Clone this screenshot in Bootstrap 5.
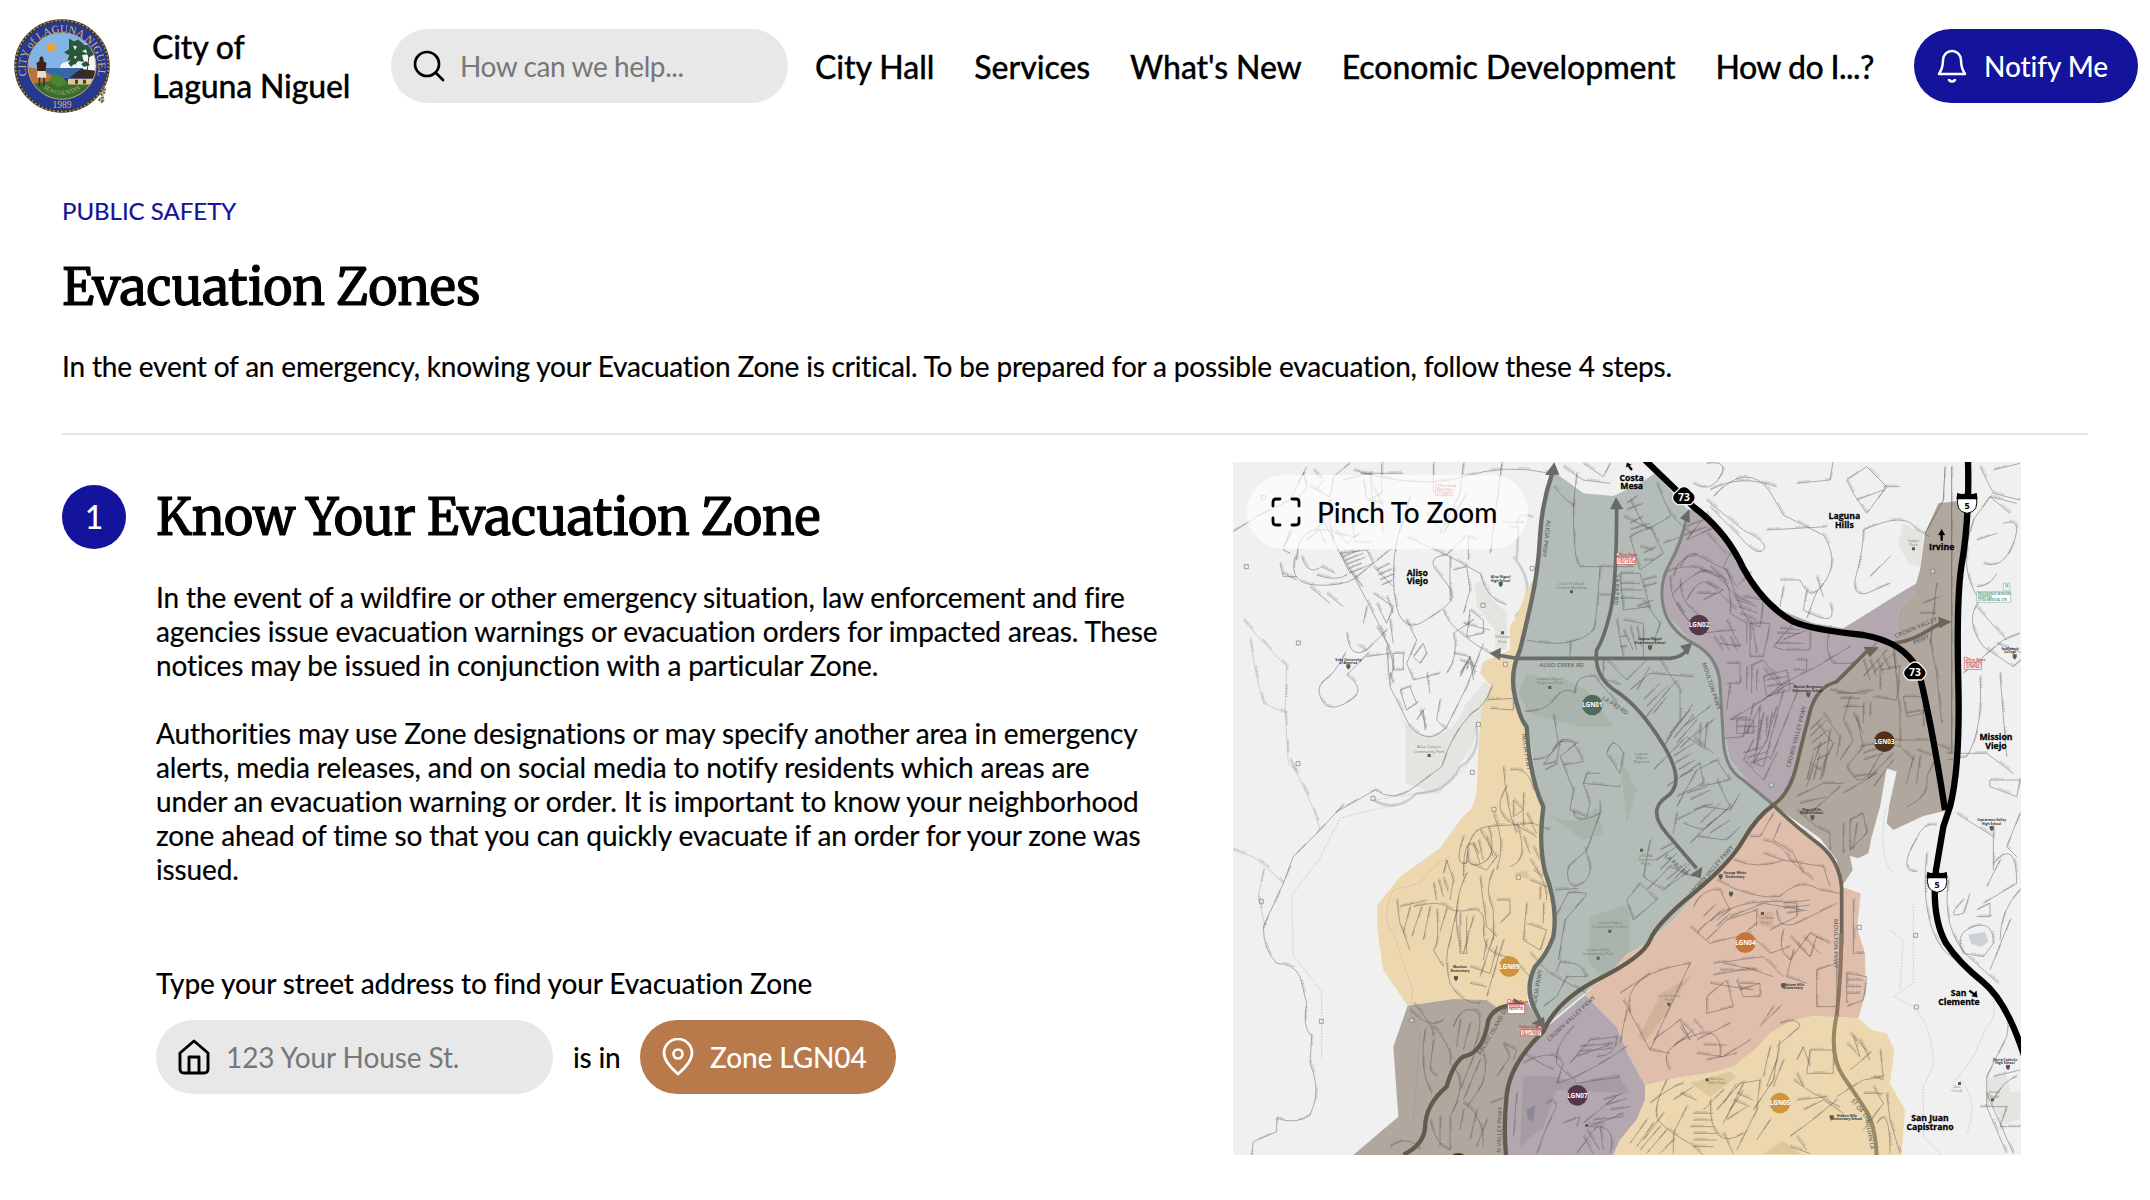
<!DOCTYPE html>
<html lang="en">
<head>
<meta charset="utf-8">
<meta name="viewport" content="width=device-width, initial-scale=1">
<title>Evacuation Zones | City of Laguna Niguel</title>
<link href="https://cdn.jsdelivr.net/npm/bootstrap@5.3.0/dist/css/bootstrap.min.css" rel="stylesheet">
<script src="https://cdn.jsdelivr.net/npm/bootstrap@5.3.0/dist/js/bootstrap.bundle.min.js" defer></script>
<style>
body{font-family:Lato,"Liberation Sans",sans-serif;font-size:28px;line-height:34px;color:#000;background:#fff;overflow:hidden}
.site-head{height:132px;padding:0 12px 0 13px}
.seal{width:98px;height:94px;flex:none;margin-top:-1px}
.brand-name{font-size:32px;line-height:39px;font-weight:500;letter-spacing:-.15px;margin-left:41px;width:239px;color:#000;text-decoration:none;-webkit-text-stroke:.3px #000}
.pill{height:74px;border-radius:37px;flex:none;white-space:nowrap}
.pill-field{width:397px;background:#e8e8e8;color:#777;padding:0 24px 0 22px}
.pill-field svg{flex:none}
.pill-field input{background:transparent;border:0;outline:0;padding:0;width:290px;color:#777;font-size:28px;letter-spacing:-.1px}
.pill-field input::placeholder{color:#777;opacity:1}
.pill-field .search-input{margin-left:-3px;letter-spacing:-.4px}
.pill-blue{background:#13139b;color:#fff;width:224px;padding-left:22px;font-weight:500;letter-spacing:-.1px}
.pill-zone{background:#b97a4b;color:#fff;width:256px;padding-left:22px;font-weight:500;letter-spacing:-.1px}
.site-nav{width:1126px;padding-left:27px;padding-right:40px}
.site-nav a{color:#000;text-decoration:none;font-size:32px;font-weight:500;letter-spacing:-.05px;white-space:nowrap;padding-top:1px;-webkit-text-stroke:.3px #000}
.site-nav a:nth-child(3){letter-spacing:-.1px}
.site-nav a:last-child{letter-spacing:-.55px}
.page{padding:0 62px}
.eyebrow{color:#13139b;font-size:24px;line-height:30px;padding-top:64px;-webkit-text-stroke:.2px #13139b}
.title-face{font-family:Merriweather,"DejaVu Serif Condensed","DejaVu Serif",serif;font-weight:400;font-size:50px;line-height:60px;letter-spacing:-.38px;-webkit-text-stroke:1px #000;white-space:nowrap}
.intro{height:301px}
.page-title{margin-top:32px}
.lede{margin-top:31px;letter-spacing:-.18px;-webkit-text-stroke:.2px #000}
.rule{height:2px;background:#e6e6e6}
.step-num{width:64px;height:64px;background:#13139b;color:#fff;font-size:32px;font-weight:500;margin-top:50px;flex:none}
.step-body{width:1010px;margin-left:30px;padding-top:53px}
.copy{letter-spacing:-.12px;white-space:nowrap;-webkit-text-stroke:.2px #000}
.copy-first{margin:32px 0 34px}
.copy-second{margin-bottom:80px}
.addr-label{margin-bottom:20px;font-weight:500;letter-spacing:-.13px}
.is-in{width:87px;padding-left:20px;font-weight:500;letter-spacing:-.2px}
.map-box{width:788px;height:693px;margin:27px 0 0 67px;flex:none;position:relative;overflow:hidden}
.pinch{position:absolute;left:14px;top:13px;width:281px;background:rgba(255,255,255,.67);padding-left:24px;font-weight:500;letter-spacing:-.15px}
</style>
</head>
<body>
<header class="site-head d-flex align-items-center">
 <svg class="seal" viewBox="0 0 98 96" preserveAspectRatio="none">
  <defs>
   <clipPath id="sealclip"><circle cx="49" cy="48" r="34"/></clipPath>
   <path id="arcTop" d="M13.500 57a36.200 36.200 0 1 1 71 0"/>
   <path id="arcSea" d="M21 54a28.500 28.500 0 0 0 56 0"/>
  </defs>
  <circle cx="49" cy="48" r="46.500" fill="#26388f" stroke="#3c3325" stroke-width="2.500"/>
  <circle cx="49" cy="48" r="46.500" fill="none" stroke="#a58d55" stroke-width="1.700" stroke-dasharray="2 2"/>
  <g clip-path="url(#sealclip)">
   <path fill="#82b4e6" d="M0 0h98v60H0z"/>
   <path fill="#f4f6f5" d="M38 57q2-7 9-6 0-7 7-7 1-13 8-16l22-6v34z"/>
   <path fill="#3367aa" d="M32 50h38v10H32z"/>
   <path fill="#b5733d" d="M14 49q14 1 30 12v12H14z"/>
   <path fill="#3a6e31" d="M14 68q24-8 70-3v24H14z"/>
   <path fill="#4e8430" d="M36 63q4-10 10-5 6 1 7 8l-8 4z"/>
   <path fill="#382b25" d="M56 60l12-9 17 2v8z"/>
   <path fill="#ddc895" d="M55 61h26v6H55z"/>
   <path fill="#4b3829" d="M62 62h3v4h-3zM70 62h3v4h-3z"/>
   <path fill="#29573a" d="M56 20l5 3 4-2 6 5 9 1 2 9-6 3-2-3-5 1 2 7-6-1-3 4-3-5-5 1 2-6-5-3 5-3zM55 45l4-4 3 4-4 4zM68 46l5-3 4 4-6 2z"/>
   <path fill="#f5f5ef" d="M60 27l4 1-2 4zM69 33l4-2 1 4zM61 38l3 0-2 3z"/>
   <path stroke="#4c3527" stroke-width="1" d="M76 37l-2 18"/>
  </g>
  <circle cx="49" cy="48" r="34" fill="none" stroke="#c0a467" stroke-width="1"/>
  <circle cx="38" cy="29" r="4.700" fill="#efa13c"/>
  <path fill="#41221b" d="M26.500 40q2-4 4 0v3l3 2-1 8h-8l-1-8 3-2z"/>
  <path fill="#e6dfd4" d="M24.500 53h8l1 7H24z"/>
  <path stroke="#51291d" stroke-width="1.600" d="M26.500 60v9M31 60v9"/>
  <path fill="none" stroke="#6e603a" stroke-width="3" stroke-dasharray="2 1" d="M89 69q5 4 0 8l1 8-5-4"/>
  <text font-family="Liberation Serif,serif" font-size="11" fill="#d9b873"><textPath href="#arcTop" startOffset="50%" text-anchor="middle">CITY of LAGUNA NIGUEL</textPath></text>
  <text font-family="Liberation Serif,serif" font-size="6" fill="#c3b54f"><textPath href="#arcSea" startOffset="50%" text-anchor="middle">SEA COUNTRY</textPath></text>
  <text x="49" y="91" text-anchor="middle" font-family="Liberation Serif,serif" font-size="9.500" fill="#d9b873">1989</text>
 </svg>
 <a href="#" class="brand-name">City of<br>Laguna Niguel</a>
 <div class="pill pill-field d-flex align-items-center">
  <svg width="34" height="34" viewBox="1 0 34 34" fill="none" stroke="#000" stroke-width="2.700" stroke-linecap="round" class="me-3"><circle cx="15" cy="15" r="12"/><path d="M24 24l7 7"/></svg>
  <input class="search-input" type="text" placeholder="How can we help..." aria-label="Search">
 </div>
 <nav class="site-nav d-flex justify-content-between">
  <a href="#">City Hall</a><a href="#">Services</a><a href="#">What's New</a><a href="#">Economic Development</a><a href="#">How do I...?</a>
 </nav>
 <div class="pill pill-blue d-flex align-items-center">
  <svg width="32" height="36" viewBox="0 0 32 36" fill="none" stroke="#fff" stroke-width="2.500" stroke-linecap="round" stroke-linejoin="round" class="me-3"><path d="M3 26q4-6 4-14a9 9 0 0 1 18 0q0 8 4 14zM13 32q3 3 6 0"/></svg>
  <span>Notify Me</span>
 </div>
</header>
<main class="page">
 <section class="intro">
  <div class="eyebrow">PUBLIC SAFETY</div>
  <h1 class="title-face page-title mb-0">Evacuation Zones</h1>
  <p class="lede mb-0">In the event of an emergency, knowing your Evacuation Zone is critical. To be prepared for a possible evacuation, follow these 4 steps.</p>
 </section>
 <div class="rule"></div>
 <section class="d-flex">
  <div class="step-num rounded-circle d-flex align-items-center justify-content-center">1</div>
  <div class="step-body">
   <h2 class="title-face mb-0">Know Your Evacuation Zone</h2>
   <p class="copy copy-first">In the event of a wildfire or other emergency situation, law enforcement and fire<br>agencies issue evacuation warnings or evacuation orders for impacted areas. These<br>notices may be issued in conjunction with a particular Zone.</p>
   <p class="copy copy-second">Authorities may use Zone designations or may specify another area in emergency<br>alerts, media releases, and on social media to notify residents which areas are<br>under an evacuation warning or order. It is important to know your neighborhood<br>zone ahead of time so that you can quickly evacuate if an order for your zone was<br>issued.</p>
   <label for="addr" class="addr-label d-block">Type your street address to find your Evacuation Zone</label>
   <div class="d-flex align-items-center">
    <div class="pill pill-field d-flex align-items-center">
     <svg width="32" height="36" viewBox="0 0 32 36" fill="none" stroke="#000" stroke-width="2.900" stroke-linejoin="round" class="me-3"><path d="M2 14L16 2l14 12v16q0 4-4 4H6q-4 0-4-4zM11 34V18h10v16"/></svg>
     <input id="addr" type="text" placeholder="123 Your House St.">
    </div>
    <span class="is-in">is in</span>
    <div class="pill pill-zone d-flex align-items-center">
     <svg width="32" height="38" viewBox="0 0 32 38" fill="none" stroke="#fff" stroke-width="2.700" class="me-3"><path d="M16 36Q2 24 2 15a14 14 0 0 1 28 0q0 9-14 21z"/><circle cx="16" cy="16" r="4.500"/></svg>
     <span>Zone LGN04</span>
    </div>
   </div>
  </div>
  <div class="map-box">
   <svg width="788" height="693" viewBox="9 6 2364 2079" preserveAspectRatio="none" class="d-block" font-family="Open Sans,Noto Sans,sans-serif">
    <defs>
    <!-- neighbourhood streets, drawn once as lines and once as lettering ticks -->
    <g id="streets" fill="none" stroke-linejoin="round">
     <path d="M9 215L90 165 180 120 230 20M240 80l60 30 10-60 50-40M390 40h130M300 120q-10 100 30 160t110 200 40 170M200 300q0-80 60-90t90 40l40-30M195 290q-20 80 60 85t120-20l110-90M260 345q60 20 90 0M215 290q20 60 60 30l40 20M455 10v90l-40 20M610 10v90M540 110L500 240M700 10l-10 90-60 120M815 10l-20 160-15 110M370 30q200 60 330 20t260-10"/>
     <path d="M500 240q-20 120 0 200t80 45 80-60-30-80 20-60l60-60M530 230l130 60 90 50q20 80 80 95M640 450q20 60 140 130M670 330l40-10 10 70-20 70M720 450l40 30v40l-50 10zM660 290v130M530 480l30 60-30 70 20 50 80-20M550 590l30-40 10 30-20 30zM650 640q40-60 20-120l60-40M480 480l10 70M430 400l60 40-20 50-30-60M430 320l60 60M330 280l80-10 20 40-70 30zM350 520q10 80 60 50l60-60M410 440l-10 50M345 580q-30 60-60 80t-10 60 80 5-5-80l70-70M410 590l70-10M470 560l10 120 60 120q60 60 110 0l60-120 50-130M590 640l10 60M630 720l-10 60 30 30M570 750l20 50M510 690l30-10 20 50-30 20zM490 580h30v50h-30zM670 580l50 10-10 40M785 680q-20 60-60 80-60 60-90 160l-80 60q-60 50-120 10l-115 65M260 210l20-30 30 60M160 260l30-50M160 340l40 20M240 380l60 50M290 400l50 40M360 330l40 50M340 60l80-20 10 100M380 160l70-20 10 80M590 160l50 60 70-120M740 240l-25-10v70M690 650l30-60 15 50"/>
     <path d="M340 290l50-20M345 302l55-22M350 314l55-22M355 326l40-16M440 330l40-20M445 345l42-18M450 360l42-18M455 375l30-12M220 40l10 40-20 30M250 30l30 30-20 30M400 60l10 60 50 10M430 80l30 60M180 210l-20 60 20 10M230 240l40-30 15 40M315 220l60 10-10-40M150 310l10 40 40 0M470 410l20 50M440 500l40 60M700 490l80 20M690 600l50 20M690 640l30-50 10 70M560 780l20-30 5 60M480 640l10 30"/>
     <path stroke-opacity=".3" d="M40 480q70 80 130 140l-5 130 10 160 30 30M60 540l20 110 20 80 70 30M180 900l50 100q30 70 40 110M9 1170l60 20 40 30 50 50M100 1230l-15 80 20 90"/>
     <path d="M340 1035L260 1120l-70 70-30 80-60 130q0 70 40 110 50 0 70 40l20 80q-15 70 15 100l-5 80q30 70 10 130l-10 25q-40 30-100 10v40l-70 30-10 70"/>
     <path d="M1030 130q0 180 20 190h160M1110 320q-10 160-20 190-60 60-200 30M1110 405h40M1020 545v50M1040 40l-10 100-60-60M1200 120l50 90 70-40M1180 170l90 40M1200 230l60-30 40 80-70 50zM1170 340h60l30 100-80 10zM1160 480l20 110M1180 480l60 10v100M1240 420l50 70-20 60M1220 440l50-20M1120 595v60l50 20M1130 600l60 60 60-60M1280 70l40 90 60 60-80 30"/>
     <path d="M1000 20l60 40 80 10M1060 10l60 40 20-40M1190 130l30-20M1190 150l50-20M1200 190l40-20M1200 210l60-20M1230 260l40 10M1240 280l40-20M1240 300l30 0M1170 370h60M1170 390h70M1170 415h70M1240 360l40-10M1240 380l40-10M1180 510l30 60M1200 500l20 70M1220 500l15 60M1170 530h20M1170 560h20"/>
     <path d="M885 755q60 0 90-40t60-15q0-60 60-50l50 60 30 40M970 765l15 80-45 70 40-10 10-60 40 0 30 60-60 10M900 900q60 0 80-40t60-10l-50 40 40 100-10 60 50 20 10-40-20-60 110 10M1060 970l10-30h40M945 930l40-20M1130 880q20-60 50 0l-10 60zM1030 1050q0 50 80 10v-40M1110 1060l-40 110-55 50q-10 50 20 60 60-20 40-80l-10-40M975 1290l70-5M985 1500l20-120 60-70q10-15-10-12h-40l-40 75M900 1480l60 60 110 60M940 1640l40-30 30-60 60 0q-20-40-40-40t-40-5l-10 30"/>
     <path d="M1200 690l60-50 130 10M1220 690l40-70M1290 600l60 90v90l-40 60M1240 780l100-120M1300 860l90-130M1360 800l80-60M1270 930l100-100 60 40M1310 980l100-70 10 60-80 40M1340 1040l60-110 60-30 40 60-90 20M1450 780l-60 50 60 50M1340 1080l80-40 80 10 30-50M1460 960l40 80-80 70-60-20M1260 1140l-20 110 60 40 80-60M1250 1290l70-70 70 30M1280 1200l60-40 40 50-70 70M1210 1380l70-60-50-50-40 50zM1400 1130l90 10 40-40M1380 1150l60-60"/>
     <path d="M1320 820l60-70M1330 835l60-70M1340 850l60-70M1350 865l60-60M1330 890l60-40M1335 910l50-30M1345 930l50-30M1350 950l40-20M1240 720l50-50M1250 740l60-60M1270 760l40-50M1410 790l0 70M1430 790l-5 70M1370 1000l60-20M1380 1020l60-30M1390 1050l60-20M1290 1170l40-20M1290 1230l50-50M1340 1060l-10 60M1410 1090l60-60M1430 1100l60-50M1440 1120l60-40M1310 1260l60-50"/>
     <path d="M1300 340q120-60 210 60l60 110 10 70M1330 350q10-60 70-65M1330 400q80-90 130-60t40 120l50 30 0 60M1350 320q30-60 60-30l80 40 30 80 50 20M1370 420q40-80 80-40l70 70M1430 370l50 20-60 30M1340 430l60 90 120-10M1500 280l60 60-40 40-40-60zM1540 410l60 10-10 80-30-10M1490 480l40 80-60-10M1560 490h60l-20 100h-40zM1630 560l60-70 50 10v70h-80zM1640 550h80M1490 610h40v60h-40M1500 670l-10 80M1500 780l100-60 60-50 100-50 100-60M1800 500q-20 80 10 110h60l70-60M1560 620l40-20 60 80-60 40M1600 650l70-20 10 60-70 20zM1700 600h30v30h-40M1640 700q60-60 60 0l-80 200M1660 690l-60 230M1570 730l-20 90 40-80-10 130M1500 780l50-10-10 60-60 5M1600 760l-30 150M1640 740l-30 100-40 70 30 10M1540 900l60 60 40-80M1570 840l-30 60M1370 240l60-80 30 40z"/>
     <path d="M1320 350q0 90 80 150M1350 360q0 80 80 120M1370 200l50-20M1380 220l50-20M1430 220l60 60M1440 320l50 40M1410 330l60 20M1400 400l60 0M1520 420l60 20M1525 440l60 20M1530 460l50 20M1450 530l30 40M1470 530l30 40M1500 530l20 40M1640 520l70 0M1650 505l60 5M1660 540l70-30M1550 620v70M1565 620v80M1580 630v60M1600 625l50 50M1610 660l60-10M1610 680l60-10M1540 880l60-20M1550 895l60-20M1560 910l60-20M1590 780v60M1610 770v60M1625 760l-10 60M1520 800h60M1520 780h50v40h-50z"/>
     <path d="M1760 790l50 60-40 80-30-20M1800 690l60 10 70-10M1860 710l-20 70 30 60-40 60M1780 760l50 70-10 60M1840 740h60M1880 770l20 90-50 60M1950 690v-60l60-10-10 100-70-10M1900 650l70-80M1930 640l60-60 10 50M1770 850l-40 130M1800 810l-20 140M1850 920q40 80 80 0t80-60l40 40M1870 950l70-10M1700 1010l80-40 60 0M1740 1060l90-80M2020 710h60v50l-50 10zM2030 760l50-10v50M1990 560l20 200 0 100M1840 1000l100-60M2100 540l20 100 15 150M2060 870l60 20-30 60q10 60-60 90M1890 860l100-20 110 0 60 30M2080 430l50-20M2070 460h50M1700 1050l60 50 40 20 0 50M1860 1080l40-20 10 60-50 50zM1840 1090v90M1880 1090l-10 80M2100 550l20-180"/>
     <path d="M1820 700h90M1830 715l60 0M1740 810l40-40M1740 830l50-50M1745 850l50-40M1750 870l50-30M1760 900l40-20M1900 600l20 60M1920 600l20 50M1940 600l20 40M1960 590l20 40M1730 960l20-80M1750 960l20-80M1770 960l20-70M1900 880l60-20M1900 900l60-20M1910 960l80-80M1930 980l60-80M1710 1030l80-20M1900 730v60M1920 730v40M1870 760l30 60M2050 890l-20 80M2070 890l-10 80"/>
     <path stroke-width="3" d="M2145 20l-5 100-55 100M2165 20v860"/>
     <path d="M1390 70q50 30 80-20t-40-40M1450 110q100-110 170-15l40 70 120 60q60 90-20 170l-30 80M1440 90q90-50 200-10M1430 120l110 90q80 40 60 60t-70-40l-90-90M1610 210l180-10M1700 70l100-10 10-60M1850 60l60-40 60 60-60 80-40-60zM1880 120l80-30M1960 80h50M1650 360l60 0q30 60 50 30M1660 380l-10 60M1730 390l-10 60q110 60 80-20M1760 350l20 60M1900 210q130-60 160 0l40 20M1900 210q0 60-20 130t30 60l70-30M1920 350l60-60M2340 160l-60-50-50 70q-50 150 20 240-50 60 10 140l90 60 80-70M2250 20l40 80 80 20M2290 30l80-20M2280 110l80 20M2240 380q40 0 60-40M2240 240l60-20M2260 310q60 20 90-60t-30-60M2300 550l80 30M2200 640l120-100 50-20M2250 650q10 160-40 240l-60 10M2310 640l10 130 10 120M2150 880h120l80 60M2280 960l90 0-10 50-80-30zM2240 440l90 100"/>
     <path d="M700 1130q-30 90 10 80 0-100 60-110l140-10 50 20M715 1170q-10 60 40 40t20-110M700 1250q0-150 50-70M790 1060q40 90 10 170M860 1090q40 110-20 130M890 1060l30 60M750 1110l50 80-30 40-50-20M710 1240q-50 100-20 220M640 1240l10-40 20 60-10 60M500 1320l10 70 30 80M510 1340l80-20M550 1340q80-20 100 0t70 10 40 60q0 80 80 80l60 60M540 1340l-20 80M575 1340l-30 90M600 1340l-20 100M620 1350q10 100-10 120l30 50M650 1345l-20 70M680 1350l-20 90q-20 60 0 130 30 60 90 60M690 1360v120h20v-110M730 1370l-30 110M790 1230q-30 60 0 120v90M750 1250l20 150 30 30M820 1440l-50 170M790 1430l-40 120M800 1320h40v40l-30 30M890 1330l-10 110 50 30 20-60-60-20M940 1330v60M900 1200q50 60 50 120M880 1000v100M820 920q10 130 40 200M830 980q-40 60 0 100l90 50M850 1020l30 30-30 20zM770 720l80-5v35l-70-5"/>
     <path d="M610 1270l10 50M625 1260l15 50M640 1255l15 40M730 1150l20 60M745 1140l15 60M770 1130l20 60M840 930q60-10 70 60M880 1130l20 50M910 1160l20 40M910 1230l30 20M900 1260l50 20M930 1280v40M770 1440l-10 60M800 1460l-20 80M720 1520l60 20M720 1570l50 10"/>
     <path d="M550 1630q60 60 60 100M610 1700q60 60 50 110 60 50 0 160M670 1700q20-60 60-50t0 120M690 1680l-10 80M585 1710q-20 120 20 190M610 1740l-10 90 20 20M720 1690l-20 80M730 1790l-40 100M750 1800l-50 120M760 1780q20 60-20 120l-30 40M700 1950l-10 60M740 1950l-20 90M770 1980l-30 80M600 1980q20 80 60 90v-100M630 1970v90M820 1750l20 40-40 60M700 1930q60 30 60 130M480 2060q60-40 90 10M540 1650q60 60 100 30M820 1750l40 20-10 30M780 1930l40-15"/>
     <path d="M880 1810q90-50 120 0l-20 60 60-20 90-50 60-40M1030 1700q-60 60-50 110l60 60 130-20M1020 1810l60-70 80-10q0 60-60 60M1040 1790l110-40M950 1930q20-20 30 10l-30 60-30 80M1000 1990l50-20-10 30M1060 1990l60-50 50-40M1080 2000l100-40M1040 2080l60-80q60 0 40 80M1070 2010l40 60M1090 1980l90-10M860 1900l-10 130M880 1780l90 50M1190 1650l-20 100M1050 1760l90-10M1045 1775l100-10M1120 1920l60-20M1130 1935l60-20M1140 1950l60-10M1060 2030l30 50M1110 2000l10 70"/>
     <path d="M1560 1130l30 0 40-70M1600 1140q60 10 80 60l70 60M1650 1060l130 100M1650 1090l-20 50 60 40 30 60M1600 1180l60 20 120 20 20 60M1510 1200q80 30 150 0M1460 1260q110 60 190 50 60-60 120-20l60 10M1390 1340q30-60 80-50l30 60-40 30M1400 1420q100-120 300-90v40l-80 40M1430 1440l60-60 90-30 0 50M1380 1400l60 50 120-30 60 60 60-20M1500 1370l100-40 120 20M1640 1350q0 60 60 40l120-60M1660 1410q-20 60 20 90l60-80M1680 1430l60 60 20-60 40 20M1450 1510l150-20 60 60M1470 1530h100l60 20M1440 1570l130 20M1430 1610l60-50 20 80-80 20zM1530 1590l60-20M1760 1530l60-20v130h-60zM1850 1540l60 10-10 70-50 20M1870 1320v160h30M1850 1540v90M1200 1660q-30-120 180-150l-60 130-60 130M1170 1600l90-60M1270 1740l80-60 30 60M1320 1830q-40-60 60-100t90 60M1400 1780l80 10 80-50M1330 1760l60-50M1400 1740l100-50M1180 1620l80 150 60 10M1690 1470l-20 80 60 20"/>
     <path d="M1420 1370l40-40M1440 1385l40-40M1460 1400l40-40M1660 1330l80-10M1660 1345l80-10M1670 1360l60-10M1700 1450l40 40M1720 1430l50 50M1740 1420l40 20M1480 1510l100 20M1450 1545l110-20M1520 1560l20 50h50v-40h-60M1350 1700l30 40M1360 1690l40 40M1390 1680l30 30M1420 1755h70M1430 1800l90-20M1630 1640l-40 60M1650 1640l-50 50M1580 1390l-60 50M1850 1560h50M1850 1580h45M1850 1600h40"/>
     <path d="M1260 1930q60-50 100-60M1310 1860q-40 80-30 110t100 80l40 35M1330 1920l60-40M1370 1940l-40 80v60M1440 1920q0 160 100 100M1460 1950l70-80 60-10-10 90-60 120M1570 1950l60-90 20-120M1620 1760l-20 90M1650 1690q60-20 60 10l-70 60M1740 1770h70v70h-80zM1700 1800l20-40 20 60M1690 1860l60 40 80 40M1700 1920l90-10M1720 1950l60-30 60 40M1860 1720l60 60-60 50M1890 1740l30 60M1950 1770l10 80-60 10-80 50M1930 1880l30 50-60 80M1970 1900l10 80 30 100M1680 2030l80-60 60-50M1380 2000h70M1390 2040h70M1300 1960l-60 80M1250 1980l-50 70M1480 1890l-60 60M1540 1870l-60 120M1940 1990q40-60 40 90M1620 1980l-40 60"/>
     <path d="M1390 1960h60M1390 1980h60M1390 2020h70M1390 2060h60M1480 1930l40-60M1500 1950l40-60M1490 1980l60-40M1520 1900l50 20M1510 1920l50 20M1270 1990l-50 70M1290 2000l-60 70M1310 2010l-60 70M1330 2040l-40 40M1870 1730l20 60M1850 1750l40 40M1700 1840l20 40M1640 1800l-30 80M1660 1800l-30 80M1930 1850l30 10M1680 2060l60 20M1700 2030l30 40M1900 1900l60 0M1480 2020l30 60M1350 1900l50 20"/>
     <path d="M2180 1060l110 70M2060 1235q-60 0 0-100 20-50 60-40M2290 1210q70-80 70 60l-100 60M2200 1320q-60 60 0 40l20-60M2240 1350l40-20v40h-40M2200 1480q-30-60 30-80t60 50l-30 40zM2370 1290q-60 60-60 150M2340 1380l-60 150M2370 1060l-40 100 30 30M2310 1200l-40 80M2290 1850l80-20M2290 1920q30-60 70-70M2270 1900l80 180M2250 1940h80l-20 60 60 0M2290 1100v130"/>
     <path d="M2090 1180q-20 200 50 290l130 110q80 60 60 150l-60 120v90l60 140M2155 1260q-20 150 60 230l90 80"/>
    </g>
    </defs>
    <path fill="#f0f0f0" d="M0 0h2380v2090H0z"/>
    <!-- parks and water outside the zones -->
    <g fill="#e4e5e1"><path d="M505 745q30 90 120 80 60-20 80-90l60-70 20 20-70 190-90 130-98-35v-165zM735 370q50-20 50 45l45 45v110h-35V510l-55-70zM2020 190l60 35-10 95-35-10-30-55zM2270 1855l60-10 10 50 30 0v80l-45 20-50-80z"/></g>
    <g fill="none" stroke="#c8d0d5" stroke-width="8"><path d="M850 290q50 60 40 110t-35 70M910 170q-60-20-45 40l-5 90M430 1020q70 40 130-20 90 0 130-80 60-30 50-120"/><path fill="#cad2d6" stroke="none" d="M380 555q30-10 30 20zM2215 1425l50-10 10 30-20 15-30-8z"/></g>
    <!-- zones -->
    <path fill="#b4bcb8" d="M968 35L945 130 930 230 925 330 905 420 870 570 850 630 855 710 890 790 905 870 915 960 942 1040 935 1130 945 1235 975 1335 970 1430 950 1485 905 1530 895 1600 935 1710 980 1670 1100 1570 1170 1495 1250 1450 1330 1380 1480 1210 1560 1110 1630 1035 1560 970 1500 900 1480 800 1470 680 1440 600 1380 540 1315 470 1290 410 1300 340 1350 220 1375 150 1275 40 1230 70 1150 108 1060 100 985 45z"/>
    <path fill="#b4a8b0" d="M1375 150L1400 150 1500 250 1570 370 1650 450 1750 490 1840 505 1920 455 2000 405 2060 370 2050 400 2010 440 2000 480 2005 545 1925 570 1820 665 1760 710 1740 750 1700 920 1680 980 1630 1035 1560 970 1500 900 1480 800 1470 680 1440 600 1380 540 1315 470 1290 410 1300 340 1350 220z"/>
    <path fill="#b0a79e" d="M2125 130L2190 122 2215 150 2190 320 2183 480 2185 880 2155 1050 2080 1068 1990 1110 1970 1090 1978 1035 2000 935 1970 925 1950 1040 1925 1130 1915 1180 1885 1195 1860 1188 1868 1230 1835 1280 1820 1200 1770 1135 1630 1035 1680 980 1700 920 1740 750 1760 710 1820 665 1925 570 2005 545 2000 480 2010 440 2050 400 2070 330 2085 220z"/>
    <path fill="#dfbfac" d="M1630 1037L1770 1150 1820 1220 1835 1280 1892 1300 1880 1400 1905 1480 1907 1600 1885 1675 1750 1668 1680 1685 1620 1720 1580 1765 1510 1820 1440 1840 1350 1852 1245 1875 1195 1785 1160 1700 1110 1650 1065 1605 1170 1495 1250 1450 1330 1380 1480 1210 1560 1110z"/>
    <path fill="#b4a8b0" d="M1065 1605L1110 1650 1160 1700 1195 1785 1245 1875 1245 1920 1220 1980 1170 2040 1150 2085 828 2085 825 1950 835 1870 870 1800 940 1710z"/>
    <path fill="#edd7ae" d="M1245 1875L1350 1852 1440 1840 1510 1820 1580 1765 1620 1720 1680 1685 1750 1668 1885 1675 1925 1710 1970 1720 1993 1770 1980 1870 2025 1950 2015 2085 1150 2085 1170 2040 1220 1980 1245 1920z"/>
    <path fill="#edd7ae" d="M920 345L895 380 865 460 840 500 840 570 760 605 750 640 785 680 755 740 745 860 740 1000 725 1045 690 1080 630 1165 510 1250 442 1335 442 1410 460 1530 533 1637 670 1617 770 1620 800 1642 890 1630 905 1530 950 1485 970 1430 975 1335 945 1235 935 1130 942 1040 915 960 905 870 890 790 855 710 850 630 870 570 905 420z"/>
    <path fill="#b0a79e" d="M533 1637L490 1760 505 1970 370 2085 828 2085 825 1950 835 1870 870 1800 940 1710 895 1630 800 1642 770 1620 670 1617z"/>
    <g fill="#a9b4ac"><path d="M890 640q60 20 120 20l60 30 80 110-100 0-150-40-35-60zM950 1060q90 50 150-20l20 80-60 20zM1080 1370l120-40v140l-80 90-45-60zM1170 890l50 100-30 100z"/><path fill="#a59ca4" d="M880 1850q100-10 160 20l120-30 40 60-220-10-40 110-70 60z"/><path fill="#d3b299" d="M1225 1730l70-130 90-55-80 120-60 80zM1590 1355l40 0v50l-45-10z"/><path fill="#dcc89b" d="M1380 1870l120-35 20 15-80 60zM1600 2082l60-40 50 40zM850 1240l40-10 10 30z"/><path fill="#8b8997" d="M890 1950l25-15-5 50-18-10z"/></g>
    <!-- trails -->
    <g fill="none" stroke="#777" stroke-opacity=".45" stroke-width="2" stroke-dasharray="5 4"><path d="M500 1035q-100 20-170 40l-60 120-85 110 5 180 85 110v200M480 560l-10 100M740 790l-30 130-80 70-200 30M660 1190q-60 30-90 80l-80 20q-40 90 0 130l30 90 30 80-10 60 30 70-20 260M1965 1050q-20 150 25 190M1890 1330l-20 140M2050 1330v240l-60 40 60 30q60 60 60 180l-30 60 0 150 70 70M1980 1410l40 30-10 150M2260 1560q60 90 10 140l-40 90-60 80M2190 1860q60 60 20 160"/></g>
    <use href="#streets" stroke="#555" stroke-opacity=".62" stroke-width="2.200"/>
    <use href="#streets" transform="translate(3 -4)" stroke="#444" stroke-opacity=".27" stroke-width="5.500" stroke-dasharray="3 2 2 2 4 2 3 2 2 3 3 2 2 2 3 46"/>

    <!-- main roads -->
    <g fill="none" stroke="#686d68" stroke-width="13" stroke-linejoin="round">
     <path d="M968 35Q935 130 930 230T905 420 870 570Q838 640 855 710T890 800Q900 960 940 1040 925 1150 945 1235 985 1340 970 1430 950 1485 915 1520 885 1580 910 1640L930 1680"/>
     <path stroke-width="11" d="M800 585l60 10h460q40-5 55-30M1160 130q0 250-20 330t-40 110q-10 80 60 125t140 160 10 155 0 110l90 105"/>
     <path stroke="#7d827e" stroke-width="9" d="M1370 170q-15 80-50 140t-20 130 90 110 80 120 10 170 60 120l90 75"/>
     <path stroke="#625b4d" d="M1630 1035q-50 35-90 105t-150 160-130 140-150 115-170 160q-100 95-110 190t-2 180"/>
     <path stroke="#6f6556" stroke-width="11" d="M1630 1035q50-35 70-120t40-160 80-90q60-60 95-95M1970 550q60 0 110-30l60-35"/>
     <path stroke="#625b4d" d="M520 2085q60-30 65-80 0-70 65-125 20-70 50-90 60-10 75-110 20-45 85-45"/>
     <path stroke="#6d6658" stroke-width="11" d="M1630 1035q60 60 140 120 60 50 65 130v170"/>
     <path stroke="#8e7561" stroke-width="12" d="M1834 1420q0 120-14 250"/>
     <path stroke="#9b8961" stroke-width="12" d="M1820 1665q-25 120 20 185t70 105 30 130"/>
     <g fill="#666b66" stroke="none"><path d="M945 45l28-38 15 37zM1140 148l18-36 22 36zM778 580l35-17-3 38zM1350 558l36-10-12 38zM905 1690l37-20 5 40zM1380 1245l32 10 5-35zM1350 175l28-28 2 42z"/><path fill="#6f6556" d="M1900 560l47 2-28 30zM2125 470l40 15-37 20z"/><path fill="#625b4d" d="M850 1615l37 17-33 20z"/></g>
    </g>
    <g fill="none" stroke="#000" stroke-width="19">
     <path d="M1245 0l145 140q100 75 150 185 60 110 150 160 60 25 210 40 120 20 165 105 40 160 80 420"/>
     <path d="M2214 0q5 180-20 320-15 100-9 350t-25 370l-20 60-22 130q-15 140 30 220 40 60 110 115 75 60 130 240"/>
    </g>
    <g text-anchor="middle" font-weight="700" fill="#fff" font-size="31">
     <g id="s73"><path fill="#000" stroke="#f2f2f2" stroke-width="4" d="M1340 94q22-28 44 0 24 20-2 40h-40q-28-20-2-40z"/><text x="1362" y="122">73</text></g>
     <use href="#s73" transform="translate(693 526)"/>
     <g id="s5"><path fill="#fff" stroke="#000" stroke-width="3" d="M2185 105q-12 50 26 55 40-5 26-55z"/><path fill="#000" d="M2182 98q14 8 28 0 14 8 30 0l3 20h-64z"/><text x="2211" y="147" fill="#000" font-size="27">5</text></g>
     <use href="#s5" transform="translate(-90 1137)"/>
    </g>
    <!-- zone badges -->
    <g font-weight="700" fill="#fff" font-size="19" text-anchor="middle">
     <circle cx="1087" cy="735" r="31" fill="#52695d"/><text x="1087" y="742">LGN01</text>
     <circle cx="1407" cy="495" r="31" fill="#55374d"/><text x="1407" y="502">LGN02</text>
     <circle cx="1963" cy="845" r="31" fill="#513219"/><text x="1963" y="852">LGN03</text>
     <circle cx="1546" cy="1448" r="31" fill="#c67439"/><text x="1546" y="1455">LGN04</text>
     <circle cx="1650" cy="1929" r="31" fill="#d0943c"/><text x="1650" y="1936">LGN05</text>
     <circle cx="1042" cy="1906" r="31" fill="#55374d"/><text x="1042" y="1913">LGN07</text>
     <circle cx="838" cy="1520" r="31" fill="#d0943c"/><text x="838" y="1527">LGN09</text>
     <circle cx="685" cy="2110" r="31" fill="#513219"/>
    </g>
    <!-- places -->
    <g font-weight="700" font-size="26" fill="#000" text-anchor="middle" stroke="#000" stroke-width=".8">
     <text x="562" y="347">Aliso</text><text x="562" y="373">Viejo</text>
     <text x="1205" y="62">Costa</text><text x="1205" y="87">Mesa</text>
     <text x="1843" y="177">Laguna</text><text x="1843" y="204">Hills</text>
     <text x="2135" y="270">Irvine</text>
     <text x="2298" y="840">Mission</text><text x="2298" y="867">Viejo</text>
     <text x="2186" y="1608">San</text><text x="2187" y="1635">Clemente</text>
     <text x="2100" y="1983">San Juan</text><text x="2100" y="2010">Capistrano</text>
     <path stroke-width="7" fill="none" d="M2135 242v-22M1206 30l-10-12M2218 1592l16 12"/><path d="M2125 225l10-17 10 17zM1188 22l3-14 13 6zM2242 1612l-3-20-14 17z"/>
    </g>
    <!-- road names -->
    <g font-weight="600" font-size="18" fill="#666b67">
     <text x="928" y="620" textLength="134">ALISO CREEK RD</text>
     <text transform="translate(950 180)rotate(97)">ALICIA PKWY</text><text transform="translate(876 822)rotate(82)">ALICIA PKWY</text>
     <text transform="translate(1157 345)rotate(94)">LA PAZ RD</text><text transform="translate(1115 717)rotate(33)">LA PAZ RD</text><text transform="translate(1303 1190)rotate(42)">LA PAZ RD</text>
     <text transform="translate(1416 610)rotate(72)">MOULTON PKWY</text><text transform="translate(1813 1377)rotate(90)">MOULTON PKWY</text>
     <text transform="translate(1680 924)rotate(-75)">CROWN VALLEY PKWY</text><text transform="translate(1386 1307)rotate(-49)">CROWN VALLEY PKWY</text><text transform="translate(958 1745)rotate(-43)">CROWN VALLEY PKWY</text>
     <text transform="translate(1997 535)rotate(-23)">CROWN VALLEY</text><text transform="translate(2053 555)rotate(-25)">PKWY</text>
     <text transform="translate(753 1787)rotate(-60)">PACIFIC ISLAND DR</text><text transform="translate(918 1640)rotate(-80)">ALICIA PKWY</text><text transform="translate(812 2078)rotate(-88)">N VALLEY PKWY</text>
     <text transform="translate(1862 1922)rotate(52)">ST OF THE</text><text transform="translate(1906 1980)rotate(80)" font-size="16">GOLDEN LA</text>
    </g>
    <!-- parks, schools and civic buildings -->
    <g font-size="12" fill="#737a74" text-anchor="middle">
     <text x="1025" y="374">Chet Holifield</text><text x="1025" y="388">Federal Building</text><text x="960" y="660">Laguna Niguel</text><text x="960" y="673">Regional Park</text>
     <text x="597" y="865">Aliso Canyon</text><text x="597" y="878">Community Park</text><text x="817" y="535">Hillview</text><text x="817" y="548">Park</text><text x="852" y="190">Foxborough</text><text x="852" y="203">Park</text><text x="398" y="250">Oak Park</text>
     <text x="1140" y="1392">Crown Valley</text><text x="1140" y="1404">Community Center</text><text x="1105" y="1473">Crown Valley</text><text x="1105" y="1486">Community Park</text>
     <text x="2050" y="245">Cabot</text><text x="2050" y="258">Park</text><text x="1610" y="1378">La Plata</text><text x="1605" y="1391">Park</text><text x="1317" y="1612">La Hermosa</text><text x="1317" y="1624">Park</text><text x="1460" y="1860">Marina</text><text x="1460" y="1872">Hills Park</text><text x="1235" y="885">Laguna</text><text x="1235" y="897">Niguel</text><text x="1235" y="909">Regional</text><text x="1247" y="1190">USCRA</text><text x="1254" y="1203">Treatment</text><text x="1247" y="1215">Plant</text><text x="1100" y="1993">Seminole</text><text x="1090" y="2005">Park</text>
     <text x="2293" y="1900">Jserra</text><text x="2293" y="1913">Field</text><text x="2180" y="1885">Oso</text><text x="2180" y="1897">Creek</text>
     <text x="901" y="1725">City Hall</text>
    </g>
    <g font-size="10" font-weight="700" fill="#333" text-anchor="middle">
     <text x="812" y="355">Aliso Niguel</text><text x="812" y="366">High School</text><text x="355" y="602">Soka University</text><text x="355" y="612">of America</text><text x="1260" y="540">Laguna Niguel</text><text x="1260" y="551">Elementary School</text><text x="1733" y="685">Marian Bergeson</text><text x="1733" y="695">Elementary School</text><text x="1745" y="1052">Niguel Hills</text><text x="1745" y="1063">Middle School</text><text x="690" y="1525">Moulton</text><text x="690" y="1535">Elementary</text><text x="1515" y="1243">George White</text><text x="1515" y="1254">Elementary</text><text x="1690" y="1578">Malcom Hills</text><text x="1690" y="1588">Elementary</text><text x="1850" y="1971">Hidden Hills</text><text x="1850" y="1981">Elementary School</text><text x="2285" y="1083">Capistrano Valley</text><text x="2285" y="1094">High School</text><text x="2325" y="1802">JSerra Catholic</text><text x="2325" y="1812">High School</text><text x="2340" y="570" font-size="9">Saddleback</text><text x="2340" y="580">College</text>
    </g>
    <g fill="#555b55"><path d="M806 366h12v9l-6 7-6-7zM349 613h12v9l-6 7-6-7zM1254 556h12v9l-6 7-6-7zM1729 697h12v9l-6 7-6-7zM1741 1066h12v9l-6 7-6-7zM672 1548h12v9l-6 7-6-7zM1466 1243h12v9l-6 7-6-7zM1497 1295h12v9l-6 7-6-7zM1653 1570h12v9l-6 7-6-7zM1799 1966h12v9l-6 7-6-7zM2279 1098h12v9l-6 7-6-7zM2328 1815h12v9l-6 7-6-7zM2348 583h12v9l-6 7-6-7z"/><path d="M1020 391h9v9h-9zM955 678h9v9h-9zM593 882h9v9h-9zM813 514h9v9h-9zM1135 1409h9v9h-9zM1100 1490h9v9h-9zM2046 262h9v9h-9zM1593 1356h9v9h-9zM1312 1628h9v9h-9zM1427 1855h9v9h-9zM1066 1992h9v9h-9zM2283 1915h9v9h-9zM2184 1866h9v9h-9zM925 1714h9v9h-9zM1230 1166h9v9h-9z"/></g>
    <g fill="#f1f1f1" fill-opacity=".5" stroke="#777" stroke-width="2"><path d="M43 314h12v12H43zM199 543h12v12h-12zM198 905h12v12h-12zM423 1009h12v12h-12zM721 931h12v12h-12zM739 787h12v12h-12zM753 430h12v12h-12zM901 319h12v12h-12zM820 607h12v12h-12zM786 1042h12v12h-12zM859 1246h12v12h-12zM88 1318h12v12H88zM268 1678h12v12h-12zM539 1675h12v12h-12zM1618 969h12v12h-12zM2102 328h12v12h-12zM1882 1396h12v12h-12zM2051 1420h12v12h-12zM2053 1635h12v12h-12zM94 107h12v12H94z"/></g>
    <!-- fire, police and hospital call-outs -->
    <g stroke="#c6494c" stroke-width="2" fill="#fff" font-size="11" font-weight="700">
     <path d="M617 87h50v20h-50zM618 73h9v9h-9zM1160 291h56v22h-56zM1160 279h8v8h-8zM833 1633h51v28h-51zM833 1619h9v9h-9zM872 1708h62v19h-62zM925 1698h8v8h-8zM2203 606h51v22h-51zM2203 592h9v9h-9z"/>
     <g fill="#c6494c" stroke="none"><text x="629" y="82">Fire Dept</text><text x="1171" y="288">Fire Dept</text><text x="845" y="1629">Fire Dept</text><text x="868" y="1704">Police Dept</text><text x="2215" y="602">Fire Dept</text><text x="621" y="97" font-size="8">MOULTON</text><text x="621" y="105" font-size="8">27 LIBERTY</text><text x="1164" y="301" font-size="8">STATION 49</text><text x="1164" y="310" font-size="8">31461 LA PAZ</text><text x="837" y="1643" font-size="8">STATION 5</text><text x="837" y="1651" font-size="8">PACIFIC ISL</text><text x="876" y="1717" font-size="8">30111 CROWN</text><text x="876" y="1725" font-size="8">VALLEY PKWY</text><text x="2207" y="616" font-size="8">STATION 31</text><text x="2207" y="625" font-size="8">OLYMPIAD</text></g>
     <g stroke="#8db5a1"><path d="M2240 395h102v32h-102zM2320 370h20v20h-20z"/><g fill="#65957c" stroke="none" font-size="9"><text x="2243" y="405">PROVIDENCE MISSION</text><text x="2243" y="415">HOSPITAL</text><text x="2243" y="424">27700 MEDICAL CTR</text><text x="2325" y="385" font-size="14">H</text></g></g>
    </g>
   </svg>
   <div class="pill pinch d-flex align-items-center">
    <svg width="30" height="30" viewBox="0 0 30 30" fill="none" stroke="#000" stroke-width="2.800" stroke-linecap="round" stroke-linejoin="round" class="me-3"><path d="M2 9V5q0-3 3-3h4M21 2h4q3 0 3 3v4M28 21v4q0 3-3 3h-4M9 28H5q-3 0-3-3v-4"/></svg>
    <span>Pinch To Zoom</span>
   </div>
  </div>
 </section>
</main>
</body>
</html>
